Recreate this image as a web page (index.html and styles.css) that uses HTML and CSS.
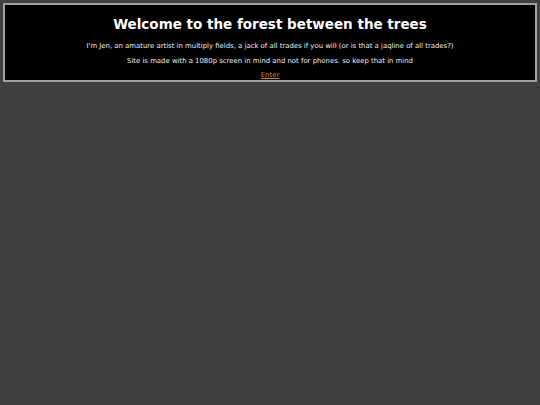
FILE: index.html
```html
<!DOCTYPE html>
<html>
<head>
<meta charset="utf-8">
<link rel="stylesheet" href="styles.css">
</head>
<body>
<div class="intro">
  <h1 class="title">Welcome to the forest between the trees</h1>
  <p class="line">I'm Jen, an amature artist in multiply fields, a jack of all trades if you will (or is that a jaqline of all trades?)</p>
  <p class="line">Site is made with a 1080p screen in mind and not for phones. so keep that in mind</p>
  <p class="line"><a class="enter" href="#">Enter</a></p>
</div>
</body>
</html>
```
FILE: styles.css
```css
html, body {
  margin: 0;
  padding: 0;
  background: #404040;
  height: 100%;
}
body {
  padding: 3px;
  box-sizing: border-box;
  font-family: "DejaVu Sans", Verdana, sans-serif;
  color: #ffffff;
}
.intro {
  background: #000000;
  border: 2px solid #a0a0a0;
  height: 79px;
  box-sizing: border-box;
  text-align: center;
  padding-top: 10px;
}
.title {
  margin: 0 0 8px;
  font-size: 13.5px;
  font-weight: bold;
  line-height: 19px;
}
.line {
  margin: 0 0 5.5px;
  font-size: 6.9px;
  line-height: 9px;
  color: #f0f0f0;
}
.enter {
  color: #c98a2a;
  text-decoration: underline;
}
```
